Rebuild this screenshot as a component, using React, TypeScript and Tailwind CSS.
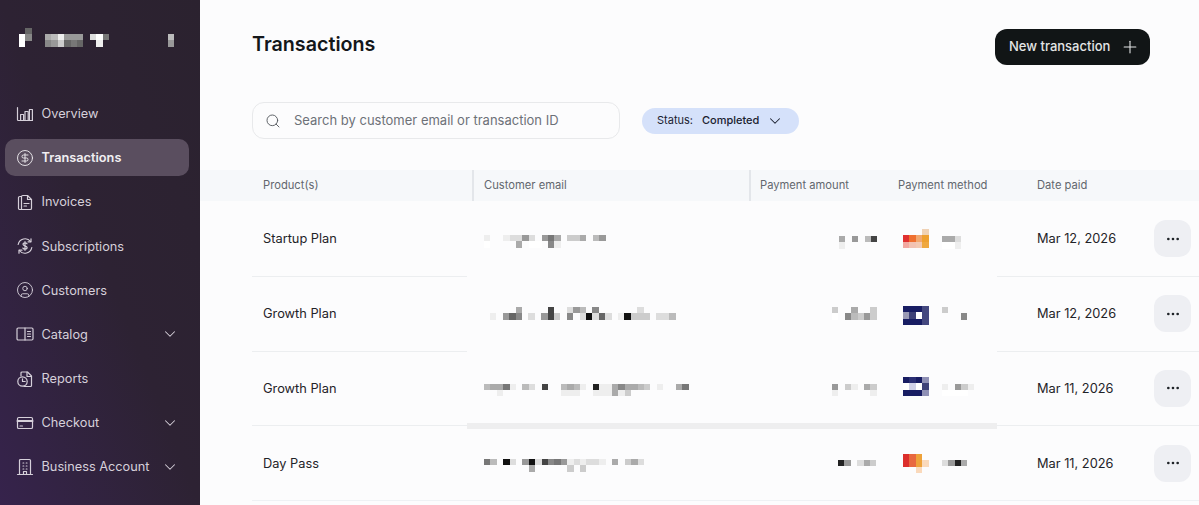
import type { ReactNode } from "react";
import { ChevronDown, CircleDollarSign, CircleUser, Ellipsis, Plus, Search } from "lucide-react";

const CELL = 6.4;

// colours for the two card logos, everything else is a hex digit grey level
const palette: Record<string, string> = {
    P: "#f0d2b5",
    R: "#e03030",
    O: "#ef7030",
    N: "#f1a870",
    A: "#eea030",
    S: "#f2a8a0",
    T: "#f2c2b2",
    U: "#f3c9b2",
    V: "#efa840",
    H: "#181d63",
    M: "#44487f",
    L: "#9a9ab5",
    K: "#3e4278",
    W: "#ffffff",
    G: "#2a2f73",
    Q: "#8f90b5",
    I: "#d0d2e8",
    J: "#dc2f2c",
    X: "#e8683f",
    Y: "#eea23a",
    Z: "#fad9bb",
};

const Pixels = ({ rows, className = "" }: { rows: string[]; className?: string }) => {
    const cols = Math.max(...rows.map((r) => r.length));
    return (
        <svg
            width={cols * CELL}
            height={rows.length * CELL}
            shapeRendering="crispEdges"
            className={`shrink-0 ${className}`}
        >
            {rows.map((row, y) =>
                row.split("").map((c, x) =>
                    c === "." ? null : (
                        <rect
                            key={`${x}-${y}`}
                            x={x * CELL}
                            y={y * CELL}
                            width={CELL}
                            height={CELL}
                            fill={palette[c] ?? `#${c}${c}${c}`}
                        />
                    ),
                ),
            )}
        </svg>
    );
};

const Icon = ({ children }: { children: ReactNode }) => (
    <svg
        width="18"
        height="18"
        viewBox="0 0 18 18"
        fill="none"
        stroke="currentColor"
        strokeWidth="1.2"
        strokeLinecap="round"
        strokeLinejoin="round"
        className="shrink-0"
    >
        {children}
    </svg>
);

const OverviewIcon = () => (
    <Icon>
        <path d="M1.5 2.5v12.2a.8.8 0 0 0 .8.8h14" />
        <rect x="4.6" y="9.5" width="3" height="6" />
        <rect x="9" y="6.5" width="3.2" height="9" />
        <rect x="13.4" y="4.5" width="3" height="11" />
    </Icon>
);

const InvoicesIcon = () => (
    <Icon>
        <path d="M5.5 3.5H3.8A1.3 1.3 0 0 0 2.5 4.8v10.4a1.3 1.3 0 0 0 1.3 1.3h10.4a1.3 1.3 0 0 0 1.3-1.3V6.5l-4-4H6.8a1.3 1.3 0 0 0-1.3 1.3V16.5" />
        <path d="M11.5 2.5v4h4" />
        <path d="M8 10.5h5M8 13h2.5" />
    </Icon>
);

const SubscriptionsIcon = () => (
    <Icon>
        <path d="M2.2 7.5A7 7 0 0 1 14.6 4.5M15.8 10.5A7 7 0 0 1 3.4 13.5" />
        <path d="M15 1.8v3h-3M3 16.2v-3h3" />
        <path d="M11 6.8c-.4-.7-1.1-1-2-1-1.200 0-2 .6-2 1.500 0 2.200 4.100 1.100 4.100 3.300 0 .9-.9 1.600-2.100 1.600-.9 0-1.700-.4-2.100-1.100M9 4.700v8.600" />
    </Icon>
);

const CatalogIcon = () => (
    <Icon>
        <rect x="1" y="3" width="16" height="12" rx="1.2" />
        <path d="M9 3v12M11.500 6.500h3M11.500 9h3M11.500 11.500h3" />
    </Icon>
);

const ReportsIcon = () => (
    <Icon>
        <path d="M5 6V3a1 1 0 0 1 1-1h5.500L15.500 6v9.500a1 1 0 0 1-1 1H8" />
        <path d="M11 2v4.500h4.500" />
        <circle cx="6.500" cy="11.500" r="4.700" />
        <path d="M6.500 8.800v2.700h2.700" />
    </Icon>
);

const CheckoutIcon = () => (
    <Icon>
        <rect x="1.500" y="3.500" width="15" height="11" rx="1.300" />
        <path d="M1.500 7h15" strokeWidth="2" />
        <path d="M4 12h2.500" />
    </Icon>
);

const BusinessIcon = () => (
    <Icon>
        <path d="M3.500 16.500V2.500a1 1 0 0 1 1-1h9a1 1 0 0 1 1 1v14" />
        <path d="M1.500 16.500h15" />
        <path d="M7 5h.8M10.200 5h.8M7 8h.8M10.200 8h.8M7 11h.8M10.200 11h.8M7.500 16.500v-3h3v3" />
    </Icon>
);

const navItems: { label: string; icon: ReactNode; active?: boolean; chevron?: boolean }[] = [
    { label: "Overview", icon: <OverviewIcon /> },
    { label: "Transactions", icon: <CircleDollarSign size={18} strokeWidth={1.2} />, active: true },
    { label: "Invoices", icon: <InvoicesIcon /> },
    { label: "Subscriptions", icon: <SubscriptionsIcon /> },
    { label: "Customers", icon: <CircleUser size={18} strokeWidth={1.2} /> },
    { label: "Catalog", icon: <CatalogIcon />, chevron: true },
    { label: "Reports", icon: <ReportsIcon /> },
    { label: "Checkout", icon: <CheckoutIcon />, chevron: true },
    { label: "Business Account", icon: <BusinessIcon />, chevron: true },
];

const transactions = [
    {
        product: "Startup Plan",
        date: "Mar 12, 2026",
        email: ["e..edd9d.97a.cca.b9", "f....a.ff.8e"],
        emailClass: "ml-[11px] mt-[33px]",
        amount: ["a.9.b4", "e"],
        amountClass: "ml-[90px] mt-[34px]",
        logo: ["...P", "RONA", "STUV"],
        logoClass: "mt-[27px]",
        method: ["aad", "ffe"],
        methodClass: "mt-[34px]",
    },
    {
        product: "Growth Plan",
        date: "Mar 12, 2026",
        email: ["....a....4..d9b.8......d", "e.968.d.94c.8.d1d6d.e1ccc.ddb"],
        emailClass: "ml-[17px] mt-[30px]",
        amount: ["c..a..c", "f.8bc9c"],
        amountClass: "ml-[83px] mt-[30px]",
        logo: ["HHHM", "LKWM", "HHHM"],
        logoClass: "mt-[29px]",
        method: ["c...", "...8"],
        methodClass: "mt-[30px]",
    },
    {
        product: "Growth Plan",
        date: "Mar 11, 2026",
        email: ["baa7e.bd.4..babe.2eea8aabc.e..a7", "..e.........eee..eeeaec"],
        emailClass: "ml-[11px] mt-[32px]",
        amount: ["9.ce.ac", "e.....e"],
        amountClass: "ml-[83px] mt-[32px]",
        logo: ["HGHQ", "fIWK", "HHHQ"],
        logoClass: "mt-[25px]",
        method: ["e.9ce", "ffff"],
        methodClass: "mt-[32px]",
    },
    {
        product: "Day Pass",
        date: "Mar 11, 2026",
        email: ["7b.1d.91d4879ededde.a.cad", ".......a.....c.c"],
        emailClass: "ml-[11px] mt-[33px]",
        amount: ["29.dac"],
        amountClass: "ml-[89px] mt-[34px]",
        logo: ["JXY.", "JXYZ", "..Z."],
        logoClass: "mt-[28px]",
        method: ["d92a"],
        methodClass: "mt-[34px]",
    },
];

const RowDivider = ({ band }: { band?: boolean }) => (
    <div className="flex h-px items-center">
        <div className="h-px w-[215px] bg-[#eceef0]" />
        <div className={band ? "h-[6px] w-[530px] bg-[#eeeeef]" : "h-px w-[530px]"} />
        <div className="h-px flex-1 bg-[#eceef0]" />
    </div>
);

const App = () => {
    return (
        <div className="flex h-screen overflow-hidden bg-[#fcfcfd] font-[Inter,sans-serif]">
            <aside className="flex w-[200px] shrink-0 flex-col bg-linear-to-tr from-[#36234c] via-[#2d2233] to-[#2b222f] pl-[5px] pr-[11px]">
                <div className="flex h-[95px] shrink-0 pl-[14px] pt-[28px]">
                    <Pixels rows={[".6", "f8", "f."]} />
                    <Pixels rows={["abe999.df7", "89c676..e"]} className="ml-[13px] mt-[6px]" />
                    <Pixels rows={["b", "9"]} className="ml-[59px] mt-[6px]" />
                </div>
                <nav className="flex flex-col gap-[7.2px]">
                    {navItems.map((item) => (
                        <div
                            key={item.label}
                            className={`flex h-[37px] items-center rounded-[10px] pl-[11px] pr-[10px] text-[12.75px] ${
                                item.active ? "bg-[#5a4e5f] font-semibold text-[#f1eef2]" : "text-[#d6d0da]"
                            }`}
                        >
                            <span className="flex w-[25.5px] shrink-0 items-center">{item.icon}</span>
                            <span className="flex-1">{item.label}</span>
                            {item.chevron && <ChevronDown size={18} strokeWidth={1.4} />}
                        </div>
                    ))}
                </nav>
            </aside>

            <main className="flex min-w-0 flex-1 flex-col pt-[29px]">
                <div className="flex items-start justify-between pl-[52px] pr-[49px]">
                    <h1 className="text-[19.7px] font-semibold leading-[30px] text-[#14171a]">Transactions</h1>
                    <button className="flex h-[36px] w-[155px] items-center rounded-xl bg-[#111516] pl-[14px] text-[13px] font-medium text-[#e4e5e5]">
                        New transaction
                        <Plus size={20} strokeWidth={1.3} className="ml-[10px]" />
                    </button>
                </div>

                <div className="mt-[37px] flex items-center pl-[52px]">
                    <div className="flex h-[37px] w-[368px] items-center rounded-xl border border-[#e8e9eb] pl-[12px] text-[13px] text-[#6d7178]">
                        <Search size={16} strokeWidth={1.4} className="text-[#55595f]" />
                        <span className="ml-[13px] pt-px">Search by customer email or transaction ID</span>
                    </div>
                    <div className="ml-[22px] flex h-[26px] w-[157px] items-center rounded-full bg-[#d5e1fa] pl-[15px] text-[11px] text-[#1b2130]">
                        Status:
                        <span className="ml-[9px] font-medium">Completed</span>
                        <ChevronDown size={18} strokeWidth={1.4} className="ml-[7px]" />
                    </div>
                </div>

                <div className="mt-[31px] flex h-[31px] shrink-0 items-center bg-[#f6f8fa] pl-[52px] text-[11.2px] text-[#62676e]">
                    <div className="flex h-full w-[220px] items-center pl-[11px]">Product(s)</div>
                    <div className="flex h-full w-[277px] items-center border-l-2 border-[#e3e6ea] pl-[10px]">
                        Customer email
                    </div>
                    <div className="flex h-full w-[138px] items-center border-l-2 border-[#e3e6ea] pl-[9px]">
                        Payment amount
                    </div>
                    <div className="w-[139px] pl-[11px]">Payment method</div>
                    <div className="pl-[11px]">Date paid</div>
                </div>

                <div className="pt-px">
                    {transactions.map((t, index) => (
                        <div key={index} className="pl-[52px]">
                            <div className="flex h-[73.75px]">
                                <div className="flex w-[221px] items-center pl-[11px] text-[12.8px] text-[#1f2328]">
                                    {t.product}
                                </div>
                                <div className="w-[276px]">
                                    <Pixels rows={t.email} className={t.emailClass} />
                                </div>
                                <div className="w-[138px]">
                                    <Pixels rows={t.amount} className={t.amountClass} />
                                </div>
                                <div className="flex w-[139px] items-start pl-[16px]">
                                    <Pixels rows={t.logo} className={t.logoClass} />
                                    <Pixels rows={t.method} className={`ml-[13px] ${t.methodClass}`} />
                                </div>
                                <div className="flex w-[128px] items-center pl-[11px] text-[12.8px] text-[#1f2328]">
                                    {t.date}
                                </div>
                                <div className="flex items-center">
                                    <div className="flex h-[37px] w-[37px] items-center justify-center rounded-xl bg-[#eeeff3] text-[#1f2328]">
                                        <Ellipsis size={16} strokeWidth={2} />
                                    </div>
                                </div>
                            </div>
                            {index === 3 ? (
                                <div className="h-px bg-[#eef1f4]" />
                            ) : (
                                <RowDivider band={index === 2} />
                            )}
                        </div>
                    ))}
                </div>
            </main>
        </div>
    );
};

export default App;
